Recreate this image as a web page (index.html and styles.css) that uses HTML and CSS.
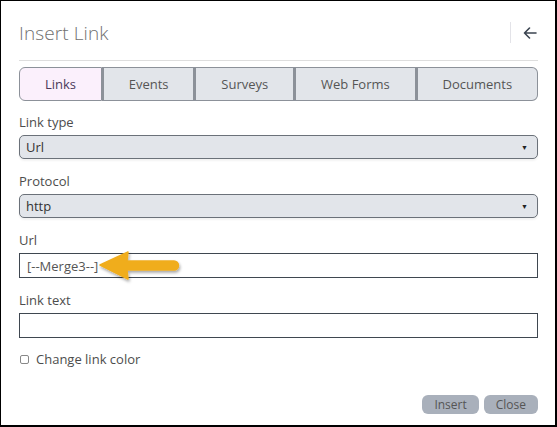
FILE: index.html
```html
<!DOCTYPE html>
<html>
<head>
<meta charset="utf-8">
<link rel="stylesheet" href="styles.css">
</head>
<body>
<div class="dialog">
  <div class="header">
    <h1 class="title">Insert Link</h1>
    <div class="header-tools">
      <span class="divider"></span>
      <svg class="back" width="14" height="12" viewBox="0 0 14 12"><path d="M13 6H1.5M6.5 1L1.5 6l5 5" fill="none" stroke="#3b4450" stroke-width="1.6" stroke-linecap="round" stroke-linejoin="round"/></svg>
    </div>
  </div>
  <div class="rule"></div>
  <div class="tabs">
    <div class="tab active">Links</div>
    <div class="tab">Events</div>
    <div class="tab">Surveys</div>
    <div class="tab">Web Forms</div>
    <div class="tab">Documents</div>
  </div>
  <div class="field">
    <label class="label">Link type</label>
    <div class="select"><span>Url</span><span class="caret">▼</span></div>
  </div>
  <div class="field">
    <label class="label">Protocol</label>
    <div class="select"><span>http</span><span class="caret">▼</span></div>
  </div>
  <div class="field">
    <label class="label">Url</label>
    <div class="input-wrap">
      <div class="input">[--Merge3--]</div>
      <svg class="pointer" width="96" height="46" viewBox="0 0 96 46">
        <defs>
          <filter id="sh" x="-20%" y="-30%" width="140%" height="170%">
            <feDropShadow dx="1" dy="2" stdDeviation="1.6" flood-color="#000" flood-opacity="0.35"/>
          </filter>
        </defs>
        <path d="M6 22 L34 9 L33 18 L80 18 A4.5 4.5 0 0 1 80 27 L33 27 L34 36 Z" fill="#f0ad1f" stroke="#f0ad1f" stroke-width="1.5" stroke-linejoin="round" filter="url(#sh)"/>
      </svg>
    </div>
  </div>
  <div class="field">
    <label class="label">Link text</label>
    <div class="input"></div>
  </div>
  <div class="check-row">
    <span class="checkbox"></span>
    <span class="check-label">Change link color</span>
  </div>
  <div class="actions">
    <button class="btn">Insert</button>
    <button class="btn">Close</button>
  </div>
</div>
</body>
</html>
```
FILE: styles.css
```css
* { box-sizing: border-box; }
html, body { margin: 0; padding: 0; background: #fff; }
body { font-family: "Open Sans", "Noto Sans", sans-serif; }

.dialog {
  width: 557px;
  height: 427px;
  border: 1px solid #000;
  border-right-width: 2px;
  border-bottom-width: 2px;
  padding: 0 17px 0 18px;
  display: flex;
  flex-direction: column;
  background: #fff;
}

.header {
  height: 59px;
  display: flex;
  align-items: center;
  justify-content: space-between;
  padding-top: 4px;
}
.title {
  margin: 0;
  font-size: 19px;
  font-weight: 300;
  color: #707070;
  letter-spacing: 0.1px;
}
.header-tools {
  display: flex;
  align-items: center;
  gap: 12px;
  padding-right: 1px;
}
.divider {
  width: 1px;
  height: 21px;
  background: #e3e3e8;
}
.back { display: block; }

.rule {
  height: 1px;
  background: #dedede;
  margin-bottom: 6px;
}

.tabs {
  display: flex;
  height: 34px;
}
.tab {
  flex: 1 1 auto;
  padding: 0 24px;
  display: flex;
  align-items: center;
  justify-content: center;
  font-size: 13px;
  color: #555;
  background: #e2e5ea;
  border: 1px solid #8c9199;
  border-left-width: 2px;
}
.tab:first-child {
  border-left-width: 1px;
  border-radius: 6px 0 0 6px;
}
.tab:last-child {
  border-radius: 0 6px 6px 0;
}
.tab.active {
  background: #fbf0fc;
  color: #4b3a5a;
}

.field {
  margin-top: 12px;
  display: flex;
  flex-direction: column;
}
.field + .field {
  margin-top: 13px;
}
.label {
  font-size: 13px;
  line-height: 18px;
  color: #4d4d4d;
  margin-bottom: 4px;
}
.select {
  height: 24px;
  border: 1px solid #6b7179;
  border-radius: 5px;
  background: #e2e5ea;
  display: flex;
  align-items: center;
  justify-content: space-between;
  padding: 0 9px 0 6px;
  font-size: 13px;
  color: #333;
  box-shadow: 0 2px 2px rgba(0,0,0,0.05);
}
.caret {
  font-size: 7px;
  color: #222;
}
.input-wrap { position: relative; }
.input {
  height: 25px;
  border: 1px solid #3f4750;
  padding: 0 7px;
  font-size: 13px;
  color: #555;
  display: flex;
  align-items: center;
}
.pointer {
  position: absolute;
  left: 75px;
  top: -10px;
}

.check-row {
  margin-top: 12px;
  display: flex;
  align-items: center;
  gap: 7px;
  padding-left: 1px;
}
.checkbox {
  width: 9px;
  height: 9px;
  border: 1px solid #888;
  border-radius: 2px;
  background: #fff;
}
.check-label {
  font-size: 13px;
  color: #4d4d4d;
}

.actions {
  margin-top: auto;
  margin-bottom: 11px;
  display: flex;
  justify-content: flex-end;
  gap: 5px;
}
.btn {
  font-family: "Open Sans", "Noto Sans", sans-serif;
  font-size: 12px;
  color: #555;
  background: #a9b0bb;
  border: none;
  border-radius: 6px;
  height: 19px;
  padding: 0 12px;
  line-height: 19px;
}
```
